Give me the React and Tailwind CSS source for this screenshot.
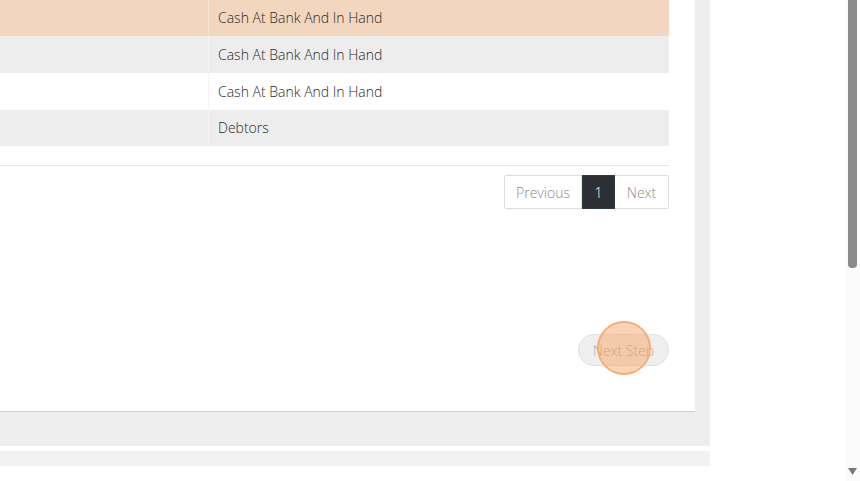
const rows = [
  { label: "Cash At Bank And In Hand", bg: "bg-[#f2d7be]", line: "border-[#f6e2d0]", h: "h-[36px]" },
  { label: "Cash At Bank And In Hand", bg: "bg-[#eeedee]", line: "border-[#f5f4f5]", h: "h-[37px]" },
  { label: "Cash At Bank And In Hand", bg: "bg-white", line: "border-[#f4f4f4]", h: "h-[37px]" },
  { label: "Debtors", bg: "bg-[#eeedee]", line: "border-[#f5f4f5]", h: "h-[36px]" },
];

function Pagination() {
  return (
    <div className="flex self-end h-[34px] text-[14px] font-light mt-[9px]">
      <div className="w-[78px] flex items-center justify-center border border-[#dddddd] text-[#8a8a8a] rounded-l-[2px]">
        Previous
      </div>
      <div className="w-[33px] flex items-center justify-center bg-[#2c2f33] border border-[#2c3a44] text-white">
        1
      </div>
      <div className="w-[54px] flex items-center justify-center border border-l-0 border-[#dddddd] text-[#8a8a8a] rounded-r-[2px]">
        Next
      </div>
    </div>
  );
}

export default function App() {
  return (
    <div className="flex w-[860px] h-[481px] overflow-hidden bg-white text-[#333] font-['Open_Sans',sans-serif]">
      <div className="w-[710px] flex flex-col">
        <div className="bg-[#eeedee] h-[446px]">
          <div className="w-[695px] h-[412px] bg-white border-b border-[#cfcfcf] flex flex-col pr-[26px]">
            <div className="flex flex-col">
              {rows.map((r, i) => (
                <div key={i} className={`flex ${r.bg} ${r.h}`}>
                  <div className={`w-[209px] border-r ${r.line}`} />
                  <div className="flex-1 flex items-center pl-[9px] pb-px text-[14px] font-light text-[#2a2a2a]">{r.label}</div>
                </div>
              ))}
            </div>
            <div className="h-[20px] border-b border-[#e6e6e6]" />
            <Pagination />
            <div className="flex justify-end mt-[125px]">
              <div className="relative">
                <div className="w-[91px] h-[32px] rounded-full bg-[#efefef] border border-[#e0e0e0] flex items-center justify-center text-[14px] font-light text-[#adadad]">
                  Next Step
                </div>
                <div className="absolute left-[19px] top-[-13px] w-[54px] h-[54px] rounded-full bg-[rgba(248,160,90,0.45)] border-2 border-[#f6ad72]" />
              </div>
            </div>
          </div>
        </div>
        <div className="h-[5px] bg-white" />
        <div className="h-[15px] bg-[#f1f2f3]" />
      </div>
      <div className="flex-1" />
      <div className="w-[15px] bg-[#fbfbfb] flex flex-col items-center">
        <div className="w-[9px] h-[268px] bg-[#8b8b8b] rounded-b-[4px]" />
        <div className="flex-1" />
        <svg width="9" height="7" viewBox="0 0 9 7" className="mb-[6px]">
          <path d="M0 0 L9 0 L4.5 7 Z" fill="#7a7a7a" />
        </svg>
      </div>
    </div>
  );
}
